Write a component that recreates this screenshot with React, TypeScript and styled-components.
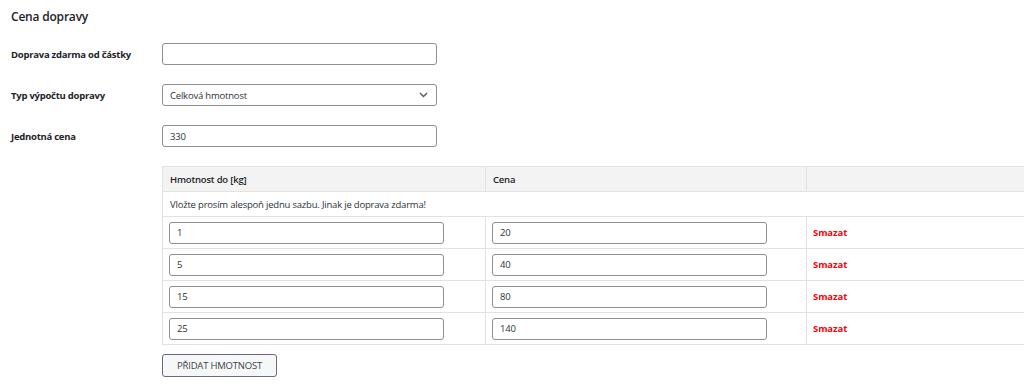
import styled, { createGlobalStyle } from 'styled-components';

const GlobalStyle = createGlobalStyle`
  html, body {
    margin: 0;
    padding: 0;
    background: #ffffff;
  }
  body {
    font-family: "Open Sans", "Noto Sans", sans-serif;
    color: #1d2327;
    overflow: hidden;
  }
`;

const Page = styled.div`
  width: 1024px;
  height: 389px;
  padding: 8px 0 0 11px;
  box-sizing: border-box;
  overflow: hidden;
`;

const Title = styled.h2`
  margin: 0 0 17px;
  font-size: 12px;
  font-weight: 600;
  letter-spacing: -0.2px;
  line-height: 18px;
  color: #1d2327;
`;

const FieldRow = styled.div`
  display: grid;
  grid-template-columns: 151px 275px;
  align-items: center;
  height: 22px;
  margin-bottom: 19px;
`;

const Label = styled.label`
  font-size: 9.5px;
  font-weight: 700;
  letter-spacing: -0.25px;
  color: #1d2327;
`;

const TextInput = styled.input`
  box-sizing: border-box;
  width: 275px;
  height: 22px;
  padding: 0 7px;
  border: 1px solid #8c8f94;
  border-radius: 3px;
  background: #fff;
  font-family: inherit;
  font-size: 9.5px;
  letter-spacing: -0.2px;
  color: #2c3338;
  outline: none;
`;

const SelectBox = styled.div`
  box-sizing: border-box;
  width: 275px;
  height: 22px;
  padding: 0 8px 0 7px;
  border: 1px solid #8c8f94;
  border-radius: 3px;
  display: flex;
  align-items: center;
  justify-content: space-between;
  font-size: 9.5px;
  letter-spacing: -0.2px;
  color: #2c3338;
`;

const TableWrap = styled.div`
  margin: 0 0 0 151px;
  width: 900px;
`;

const Rates = styled.table`
  border-collapse: collapse;
  table-layout: fixed;
  width: 100%;
  border-top: 1px solid #e2e2e2;
  border-left: 1px solid #e2e2e2;
  border-bottom: 1px solid #e2e2e2;
  font-size: 9.5px;
  letter-spacing: -0.2px;
  color: #2c3338;
`;

const Th = styled.th<{ $w?: number }>`
  box-sizing: border-box;
  background: #f3f3f3;
  text-align: left;
  font-weight: 600;
  height: 25px;
  padding: 0 7px;
  border-right: 1px solid #e2e2e2;
  border-bottom: 1px solid #e2e2e2;
  width: ${(p) => (p.$w ? `${p.$w}px` : 'auto')};
  color: #1d2327;
`;

const Td = styled.td`
  height: 31px;
  padding: 0 6px;
  border-right: 1px solid #e2e2e2;
  border-bottom: 1px solid #e2e2e2;
`;

const Notice = styled.td`
  height: 24px;
  padding: 0 7px;
  border-bottom: 1px solid #e2e2e2;
`;

const Delete = styled.a`
  color: #ff0000;
  font-weight: 700;
  font-size: 9.5px;
  letter-spacing: -0.1px;
  text-decoration: none;
`;

const AddButton = styled.button`
  margin: 9px 0 0 151px;
  box-sizing: border-box;
  width: 115px;
  height: 23px;
  padding: 0;
  border: 1px solid #6b668a;
  border-radius: 3px;
  background: #f6f7f7;
  font-family: inherit;
  font-size: 9.5px;
  letter-spacing: -0.2px;
  color: #3c434a;
`;

const rates = [
  { weight: '1', price: '20' },
  { weight: '5', price: '40' },
  { weight: '15', price: '80' },
  { weight: '25', price: '140' },
];

function Chevron() {
  return (
    <svg width="9" height="6" viewBox="0 0 9 6" fill="none">
      <path d="M1 1l3.5 3.5L8 1" stroke="#50575e" strokeWidth="1.4" />
    </svg>
  );
}

export default function App() {
  return (
    <>
      <GlobalStyle />
      <Page>
        <Title>Cena dopravy</Title>
        <FieldRow>
          <Label>Doprava zdarma od částky</Label>
          <TextInput defaultValue="" />
        </FieldRow>
        <FieldRow>
          <Label>Typ výpočtu dopravy</Label>
          <SelectBox>
            <span>Celková hmotnost</span>
            <Chevron />
          </SelectBox>
        </FieldRow>
        <FieldRow>
          <Label>Jednotná cena</Label>
          <TextInput defaultValue="330" />
        </FieldRow>
        <TableWrap>
          <Rates>
            <thead>
              <tr>
                <Th $w={323}>Hmotnost do [kg]</Th>
                <Th $w={321}>Cena</Th>
                <Th />
              </tr>
            </thead>
            <tbody>
              <tr>
                <Notice colSpan={3}>Vložte prosím alespoň jednu sazbu. Jinak je doprava zdarma!</Notice>
              </tr>
              {rates.map((r) => (
                <tr key={r.weight}>
                  <Td>
                    <TextInput defaultValue={r.weight} />
                  </Td>
                  <Td>
                    <TextInput defaultValue={r.price} />
                  </Td>
                  <Td>
                    <Delete href="#">Smazat</Delete>
                  </Td>
                </tr>
              ))}
            </tbody>
          </Rates>
        </TableWrap>
        <AddButton>PŘIDAT HMOTNOST</AddButton>
      </Page>
    </>
  );
}
